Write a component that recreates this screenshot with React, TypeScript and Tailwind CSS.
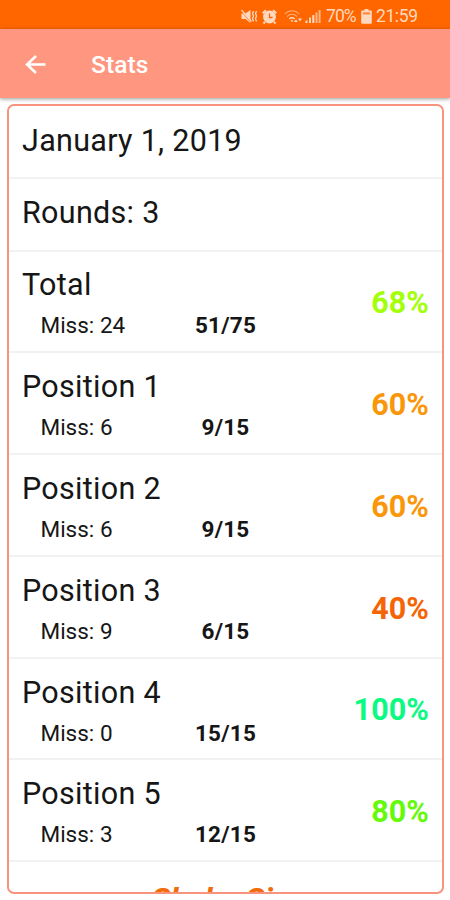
import React from 'react';

interface StatRow {
    label: string;
    miss: number;
    score: string;
    percent: number;
    color: string;
}

const rows: StatRow[] = [
    { label: 'Total', miss: 24, score: '51/75', percent: 68, color: 'text-[#a3ff0a]' },
    { label: 'Position 1', miss: 6, score: '9/15', percent: 60, color: 'text-[#fa960a]' },
    { label: 'Position 2', miss: 6, score: '9/15', percent: 60, color: 'text-[#fa960a]' },
    { label: 'Position 3', miss: 9, score: '6/15', percent: 40, color: 'text-[#f56405]' },
    { label: 'Position 4', miss: 0, score: '15/15', percent: 100, color: 'text-[#0afa82]' },
    { label: 'Position 5', miss: 3, score: '12/15', percent: 80, color: 'text-[#64fa0a]' },
];

const StatusBar: React.FC = () => (
    <div className="h-[29px] shrink-0 bg-[#ff6600] pl-[241px] pt-[3px] flex items-center text-[#ffd9bf]">
        {/* Muted with vibration */}
        <svg className="w-[17px] h-[15px]" viewBox="0 0 17 15" fill="none" stroke="currentColor">
            <path d="M0.5 4.5h4l5-3.5v13l-5-4h-4z" fill="currentColor" stroke="none" />
            <path d="M0 2l10 11.5" stroke="#ff6600" strokeWidth="0.8" />
            <path d="M0.5 1l10 11.5" strokeWidth="1.2" />
            <path d="M12.5 2l-1 2.4 1 2.6-1 2.6 1 2.9M15.5 2l-1 2.4 1 2.6-1 2.6 1 2.9" strokeWidth="1.3" />
        </svg>
        {/* Alarm */}
        <svg className="ml-[4px] w-[15px] h-[15px]" viewBox="0 0 15 15" fill="none" stroke="currentColor">
            <circle cx="7.5" cy="8" r="6.4" fill="currentColor" stroke="none" />
            <path d="M0.7 4.2L4 1.2M14.3 4.2L11 1.2M3 13l-1.5 1.5M12 13l1.5 1.5" strokeWidth="2" />
            <path d="M7.5 4.5V8.5h3" stroke="#ff6600" strokeWidth="1.3" />
        </svg>
        {/* Wifi */}
        <svg className="ml-[7px] w-[19px] h-[15px]" viewBox="0 0 19 15" fill="none" stroke="currentColor">
            <path d="M0.8 4.8C5 .8 11 .8 15.2 4.8M3 7.5c3-2.7 7-2.7 10 0" strokeWidth="1.1" opacity=".65" />
            <path d="M5.3 9.8c1.8-1.3 3.6-1.3 5.4 0" strokeWidth="1.5" />
            <path d="M6.5 11.2h3L8 13.3zM10 13l2-2.7 1.7 2.7zM14 9.5h4l-2 3z" fill="currentColor" stroke="none" />
        </svg>
        {/* Signal */}
        <svg className="ml-[2px] w-[16px] h-[15px]" viewBox="0 0 16 15" fill="currentColor">
            <path d="M0.5 11.5h2V14h-2zM4 8.5h2V14H4zM7.3 6h2v8h-2z" />
            <path d="M10.5 3.5h2V14h-2zM13.6 1h2v13h-2z" opacity=".7" />
        </svg>
        <span className="ml-[5px] w-[31px] text-[17.5px] leading-[18px] tracking-[-0.9px] whitespace-nowrap">70%</span>
        <svg className="ml-[4px] w-[11px] h-[15px]" viewBox="0 0 11 15" fill="currentColor">
            <path d="M3.5 0h4v1.5H10a.8.8 0 0 1 .8.8v11.4a1 1 0 0 1-1 1H1.2a1 1 0 0 1-1-1V2.3a.8.8 0 0 1 .8-.8h2.5z" />
            <path d="M2 3.3h7v2.2H2z" fill="#ff8a3d" />
        </svg>
        <span className="ml-[4px] text-[17.5px] leading-[18px] tracking-[-0.4px]">21:59</span>
    </div>
);

const Header: React.FC = () => (
    <header className="h-[69px] shrink-0 bg-[#ff967f] shadow-[0_1px_4px_rgba(0,0,0,0.4)] flex items-center pl-[25px] pt-[2px] text-white">
        <svg className="w-[22px] h-[20px]" viewBox="0 0 22 20" fill="none" stroke="currentColor" strokeWidth="2.5">
            <path d="M20.5 9.5H2.5M11 1L2 9.5l9 8.5" />
        </svg>
        <h1 className="ml-[44px] pt-[2px] text-[24.5px] font-medium leading-none tracking-[0.1px]">Stats</h1>
    </header>
);

const StatItem: React.FC<{ row: StatRow }> = ({ row }) => (
    <div className="h-[101.8px] shrink-0 border-b-2 border-[#f2f2f2] flex items-center justify-between pl-[13px] pr-[13px] pt-[4px]">
        <div>
            <div className="text-[30.5px] leading-[34px] tracking-[0.3px]">{row.label}</div>
            <div className="mt-[10px] flex text-[22.5px] leading-[26px]">
                <span className="w-[134px] pl-[18.5px]">Miss: {row.miss}</span>
                <span className="w-[139px] text-center font-bold tracking-[0.2px]">{row.score}</span>
            </div>
        </div>
        <span className={`text-[30.5px] font-bold leading-none tracking-[0.1px] ${row.color}`}>{row.percent}%</span>
    </div>
);

const App: React.FC = () => {
    return (
        <div className="w-full h-[900px] overflow-hidden bg-white flex flex-col font-['Roboto',sans-serif] text-[#161616]">
            <StatusBar />
            <Header />
            <main className="mt-[6px] ml-[7px] mr-[6px] h-[790px] shrink-0 border-2 border-[#f8937e] rounded-[7px] overflow-hidden flex flex-col">
                <div className="h-[73px] shrink-0 border-b-2 border-[#f2f2f2] pl-[13px] pb-[1px] flex items-center text-[30.5px] tracking-[0.3px]">January 1, 2019</div>
                <div className="h-[72.5px] shrink-0 border-b-2 border-[#f2f2f2] pl-[13px] pb-[2px] flex items-center text-[30.5px] tracking-[0.3px]">Rounds: 3</div>
                {rows.map(row => (
                    <StatItem key={row.label} row={row} />
                ))}
                <div className="pt-[18px] shrink-0 text-center text-[32px] leading-[38px] font-bold italic text-[#f26a0a]">Shake Sim</div>
            </main>
        </div>
    );
};

export default App;
